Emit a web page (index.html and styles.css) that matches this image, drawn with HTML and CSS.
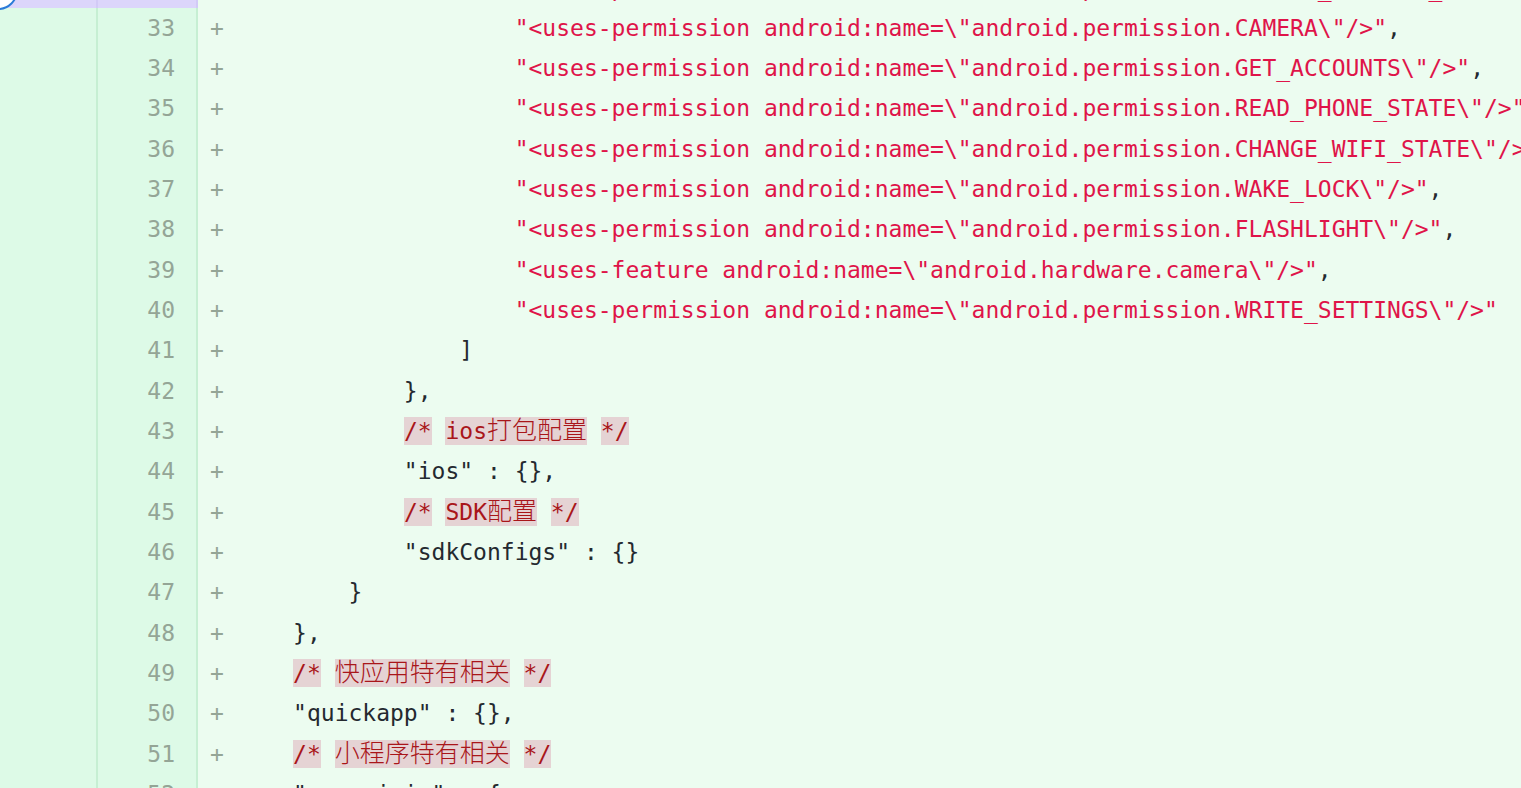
FILE: index.html
```html
<!DOCTYPE html>
<html lang="zh-CN">
<head>
<meta charset="utf-8">
<title>diff</title>
<link rel="stylesheet" href="styles.css">
</head>
<body>
<div class="diff">
  <div class="row sel"><div class="old"></div><div class="new">32</div><div class="code"><span class="mark">+</span>                     <span class="s">"&lt;uses-permission android:name=\"android.permission.ACCESS_NETWORK_STATE\"/&gt;"</span>,</div></div>
  <div class="row"><div class="old"></div><div class="new">33</div><div class="code"><span class="mark">+</span>                     <span class="s">"&lt;uses-permission android:name=\"android.permission.CAMERA\"/&gt;"</span>,</div></div>
  <div class="row"><div class="old"></div><div class="new">34</div><div class="code"><span class="mark">+</span>                     <span class="s">"&lt;uses-permission android:name=\"android.permission.GET_ACCOUNTS\"/&gt;"</span>,</div></div>
  <div class="row"><div class="old"></div><div class="new">35</div><div class="code"><span class="mark">+</span>                     <span class="s">"&lt;uses-permission android:name=\"android.permission.READ_PHONE_STATE\"/&gt;"</span>,</div></div>
  <div class="row"><div class="old"></div><div class="new">36</div><div class="code"><span class="mark">+</span>                     <span class="s">"&lt;uses-permission android:name=\"android.permission.CHANGE_WIFI_STATE\"/&gt;"</span>,</div></div>
  <div class="row"><div class="old"></div><div class="new">37</div><div class="code"><span class="mark">+</span>                     <span class="s">"&lt;uses-permission android:name=\"android.permission.WAKE_LOCK\"/&gt;"</span>,</div></div>
  <div class="row"><div class="old"></div><div class="new">38</div><div class="code"><span class="mark">+</span>                     <span class="s">"&lt;uses-permission android:name=\"android.permission.FLASHLIGHT\"/&gt;"</span>,</div></div>
  <div class="row"><div class="old"></div><div class="new">39</div><div class="code"><span class="mark">+</span>                     <span class="s">"&lt;uses-feature android:name=\"android.hardware.camera\"/&gt;"</span>,</div></div>
  <div class="row"><div class="old"></div><div class="new">40</div><div class="code"><span class="mark">+</span>                     <span class="s">"&lt;uses-permission android:name=\"android.permission.WRITE_SETTINGS\"/&gt;"</span></div></div>
  <div class="row"><div class="old"></div><div class="new">41</div><div class="code"><span class="mark">+</span>                 ]</div></div>
  <div class="row"><div class="old"></div><div class="new">42</div><div class="code"><span class="mark">+</span>             },</div></div>
  <div class="row"><div class="old"></div><div class="new">43</div><div class="code"><span class="mark">+</span>             <span class="c">/*</span> <span class="c">ios<span class="cjk">打包配置</span></span> <span class="c">*/</span></div></div>
  <div class="row"><div class="old"></div><div class="new">44</div><div class="code"><span class="mark">+</span>             "ios" : {},</div></div>
  <div class="row"><div class="old"></div><div class="new">45</div><div class="code"><span class="mark">+</span>             <span class="c">/*</span> <span class="c">SDK<span class="cjk">配置</span></span> <span class="c">*/</span></div></div>
  <div class="row"><div class="old"></div><div class="new">46</div><div class="code"><span class="mark">+</span>             "sdkConfigs" : {}</div></div>
  <div class="row"><div class="old"></div><div class="new">47</div><div class="code"><span class="mark">+</span>         }</div></div>
  <div class="row"><div class="old"></div><div class="new">48</div><div class="code"><span class="mark">+</span>     },</div></div>
  <div class="row"><div class="old"></div><div class="new">49</div><div class="code"><span class="mark">+</span>     <span class="c">/*</span> <span class="c"><span class="cjk">快应用特有相关</span></span> <span class="c">*/</span></div></div>
  <div class="row"><div class="old"></div><div class="new">50</div><div class="code"><span class="mark">+</span>     "quickapp" : {},</div></div>
  <div class="row"><div class="old"></div><div class="new">51</div><div class="code"><span class="mark">+</span>     <span class="c">/*</span> <span class="c"><span class="cjk">小程序特有相关</span></span> <span class="c">*/</span></div></div>
  <div class="row"><div class="old"></div><div class="new">52</div><div class="code"><span class="mark">+</span>     "mp-weixin" : {</div></div>
</div>
<div class="add-btn"></div>
</body>
</html>
```

FILE: styles.css
```css
html, body {
  margin: 0;
  padding: 0;
  height: 788px;
  overflow: hidden;
  background: #ecfcf0;
}

body {
  position: relative;
  font-family: "DejaVu Sans Mono", "Liberation Mono", "Noto Sans CJK SC", monospace;
  font-size: 23px;
  color: #24292f;
}

.diff {
  margin-top: -32.5px;
  display: flex;
  flex-direction: column;
}

.row {
  display: grid;
  grid-template-columns: 98px 100px 1fr;
  height: 40.333px;
  line-height: 40.333px;
}

.old,
.new {
  background: #ddfae7;
  border-right: 2px solid #c6efd3;
}

.new {
  text-align: right;
  padding-right: 21px;
  color: #94a596;
}

.row.sel .old,
.row.sel .new {
  background: #dcd5fb;
  border-right-color: #d2caf6;
}

.code {
  background: #ecfcf0;
  padding-left: 12px;
  white-space: pre;
  overflow: hidden;
}

.mark {
  color: #94a596;
}

.s {
  color: #df1449;
}

.c {
  color: #a9161a;
  background: #e5d3d4;
  padding: 1px 0;
}

.cjk {
  font-family: "Noto Sans CJK SC", sans-serif;
  font-size: 25px;
  font-weight: 300;
  line-height: 1;
}

.add-btn {
  position: absolute;
  left: -22px;
  top: -30px;
  width: 40px;
  height: 40px;
  box-sizing: border-box;
  border: 2px solid #2a7bd8;
  border-radius: 50%;
  background: #ffffff;
}
```
